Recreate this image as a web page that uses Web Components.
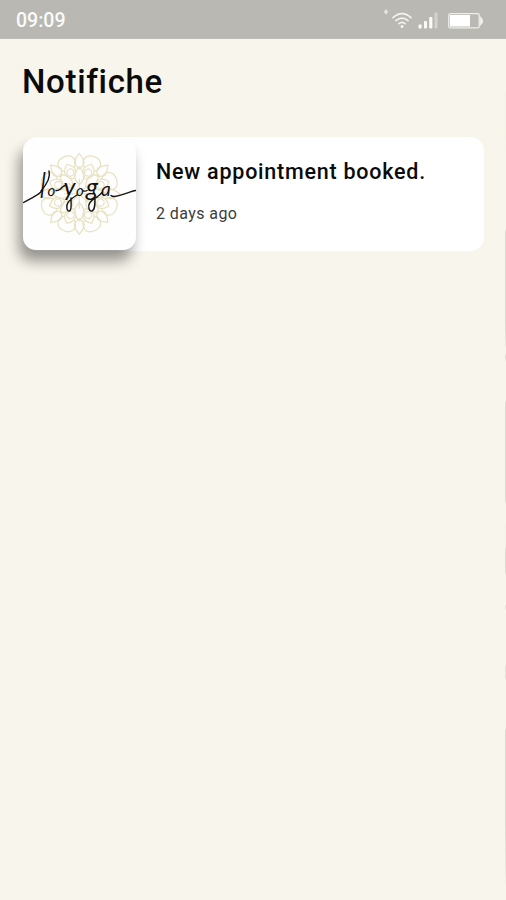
<!DOCTYPE html>
<html lang="it">
<head>
<meta charset="utf-8">
<title>Notifiche</title>
<style>
  html, body { margin: 0; height: 100%; }
  body {
    background: #f8f5ec;
    color: #0b0b0b;
    font-family: Roboto, "Liberation Sans", sans-serif;
    overflow: hidden;
  }
</style>
</head>
<body>
<app-screen>
  <status-bar slot="status">09:09</status-bar>
  <page-title>Notifiche</page-title>
  <notification-card>
    <yoga-logo slot="logo"></yoga-logo>
    New appointment booked.
    <span slot="time">2 days ago</span>
  </notification-card>
</app-screen>

<script>
const screenTmp = document.createElement('template');
screenTmp.innerHTML = `
<style>
:host {
    --edge: #dedbd3;
    --warm: #fbeee4;
    display: flex;
    flex-direction: column;
    height: 100vh;
    box-sizing: border-box;
    background:
        linear-gradient(to bottom,
            transparent 90px, var(--warm) 94px 136px, transparent 150px 228px,
            var(--edge) 232px 325px, #ece8e0 345px, transparent 349px 354px,
            var(--edge) 356px 358px, transparent 361px 400px,
            var(--edge) 403px 500px, transparent 504px 521px,
            var(--warm) 525px 546px, var(--edge) 550px 572px, transparent 575px 604px,
            #e9e6df 606px 608px, transparent 611px 664px,
            #e5e2da 667px 677px, transparent 681px 727px,
            var(--edge) 731px 825px, #ebe7df 870px, transparent 890px)
        right top / 1px 100% no-repeat,
        #f8f5ec;
}
main {
    display: flex;
    flex-direction: column;
    padding: 20px 22px 0 23px;
}
</style>
<slot name="status"></slot>
<main><slot></slot></main>
`;

class AppScreen extends HTMLElement {
    constructor() {
      super();
      this.attachShadow({ mode: 'open' }).appendChild(screenTmp.content.cloneNode(true));
    }
}

const statusTmp = document.createElement('template');
statusTmp.innerHTML = `
<style>
:host {
    display: flex;
    align-items: center;
    justify-content: space-between;
    height: 39px;
    padding: 4px 21px 0 16px;
    box-sizing: border-box;
    background: #b9b8b3;
    border-bottom: 1px solid #bcbbb6;
    color: #fbfbf9;
    font-size: 19.5px;
    font-weight: 500;
    line-height: 1;
}
svg { display: block; }
</style>
<slot></slot>
<svg width="102" height="26" viewBox="0 0 102 26" fill="none" stroke="#f4f4f0">
  <path d="M3 1.4 4.7 3.8 3 6.2 1.3 3.8Z" fill="#e2e1dc" stroke="#e2e1dc" stroke-width="1"/>
  <g stroke-width="1.7" stroke-linecap="round">
    <path d="M10 9.6Q19 1.6 28 9.6"/>
    <path d="M13 12.7Q19 7.4 25 12.7"/>
    <path d="M16 15.7Q19 13.1 22 15.7"/>
  </g>
  <circle cx="19" cy="18.4" r="1.5" fill="#f4f4f0" stroke="none"/>
  <g stroke="none" fill="#fafaf7">
    <rect x="35.5" y="16.5" width="3.2" height="4" rx="1"/>
    <rect x="41" y="13" width="3" height="7.5" rx="1"/>
    <rect x="46.2" y="9" width="3.2" height="11.5" rx="1"/>
    <rect x="51.5" y="4.5" width="3" height="16" rx="1" fill="#d3d2cd"/>
  </g>
  <rect x="65.8" y="5.7" width="30.4" height="14.2" rx="1.5" stroke="#eeeeea" stroke-width="1.3"/>
  <rect x="67" y="7" width="20" height="11.5" fill="#fff" stroke="none"/>
  <path d="M97 8 100 11.5v3L97 18Z" fill="#eeeeea" stroke="none"/>
</svg>
`;

class StatusBar extends HTMLElement {
    constructor() {
      super();
      this.attachShadow({ mode: 'open' }).appendChild(statusTmp.content.cloneNode(true));
    }
}

const titleTmp = document.createElement('template');
titleTmp.innerHTML = `
<style>
:host {
    display: block;
    height: 78px;
}
h1 {
    margin: 0 0 0 -1px;
    font-size: 33px;
    font-weight: 500;
    line-height: 46px;
    letter-spacing: 0.68px;
    font-variant-ligatures: none;
}
</style>
<h1><slot></slot></h1>
`;

class PageTitle extends HTMLElement {
    constructor() {
      super();
      this.attachShadow({ mode: 'open' }).appendChild(titleTmp.content.cloneNode(true));
    }
}

const cardTmp = document.createElement('template');
cardTmp.innerHTML = `
<style>
:host {
    display: flex;
    gap: 20px;
    height: 114px;
    padding: 1px 0;
    box-sizing: border-box;
    border-radius: 14px;
    background: #fff;
}
.body {
    display: flex;
    flex-direction: column;
    gap: 15px;
    padding-top: 20px;
}
.message {
    font-size: 21.5px;
    font-weight: 500;
    line-height: 28px;
    letter-spacing: 0.76px;
    white-space: nowrap;
}
.time {
    color: #3c3c3c;
    font-size: 16px;
    line-height: 25px;
    letter-spacing: 0.42px;
}
</style>
<slot name="logo"></slot>
<div class="body">
  <div class="message"><slot></slot></div>
  <div class="time"><slot name="time"></slot></div>
</div>
`;

class NotificationCard extends HTMLElement {
    constructor() {
      super();
      this.attachShadow({ mode: 'open' }).appendChild(cardTmp.content.cloneNode(true));
    }
}

const logoTmp = document.createElement('template');
logoTmp.innerHTML = `
<style>
:host {
    display: block;
    flex: none;
    width: 113px;
    height: 112px;
    border-radius: 13px;
    background: #fefefe;
    box-shadow: -4px 11px 14px 0 rgba(0, 0, 0, 0.4);
}
svg { display: block; }
text {
    font-family: Lato, "Liberation Sans", sans-serif;
    font-style: italic;
    font-weight: 400;
    fill: #111;
}
.mandala {
    fill: none;
    stroke: #e8e1c2;
    stroke-width: 1.2;
}
.stroke {
    fill: none;
    stroke: #151515;
    stroke-width: 1.4;
    stroke-linecap: round;
}
</style>
<svg width="113" height="112" viewBox="0 0 113 112">
  <g class="mandala" transform="translate(56.3 55.8)"></g>
  <path class="stroke" d="M.5 64.5C7 61 14 58 19 53"/>
  <text y="58"><tspan x="16" y="60" font-size="36" font-weight="300">l</tspan><tspan x="24.5" y="58" font-size="15">o</tspan> <tspan x="40.5" font-size="25">y</tspan><tspan x="53" font-size="15">o</tspan><tspan x="63" font-size="25">g</tspan><tspan x="78" font-size="19">a</tspan></text>
  <path class="stroke" d="M33 52.5Q35 53 37.5 51M37.5 51Q40 48 42 47.5M60.5 53Q62.5 53.5 64 52.5M74 59Q77 57 79 54.5"/>
  <!-- swashes below the line -->
  <path class="stroke" d="M48 60C48 67 49 72 46.5 73S42.5 68 45 64.500S50 59.500 54 57M72 60C72 67 72 72 69 73S64.500 68 67 64.500S71 61 74 59"/>
  <path class="stroke" d="M88 57.5C91 60.5 98 57 103 55.4S110 53 112.5 52.5"/>
  <path class="stroke" d="M18 53C24 46 27.500 38 26 33"/>
</svg>
`;

class YogaLogo extends HTMLElement {
    constructor() {
      super();
      this.attachShadow({ mode: 'open' }).appendChild(logoTmp.content.cloneNode(true));
      this.drawMandala();
    }

    drawMandala() {
      // one eighth of the flower, repeated around the centre
      let petals = '';
      for (let i = 0; i < 8; i++) {
        petals += `
          <g transform="rotate(${i * 45})">
            <path d="M-5 -31Q-4 -36 0 -40.5Q4 -36 5 -31Q3 -27 0 -25Q-3 -27 -5 -31Z"/>
            <path d="M0 -9Q-9 -17 0 -27Q9 -17 0 -9"/>
            <path d="M0 0V-15"/>
            <g transform="rotate(22.5)">
              <path d="M-5 -26C-12 -32 -9 -40 0 -40S12 -32 5 -26"/>
              <path d="M0 -16Q-11 -24 0 -32Q11 -24 0 -16"/>
              <circle cy="-23" r="3.6"/>
            </g>
          </g>`;
      }
      this.shadowRoot.querySelector('.mandala').innerHTML = petals;
    }
}

customElements.define('app-screen', AppScreen);
customElements.define('status-bar', StatusBar);
customElements.define('page-title', PageTitle);
customElements.define('notification-card', NotificationCard);
customElements.define('yoga-logo', YogaLogo);
</script>
</body>
</html>
